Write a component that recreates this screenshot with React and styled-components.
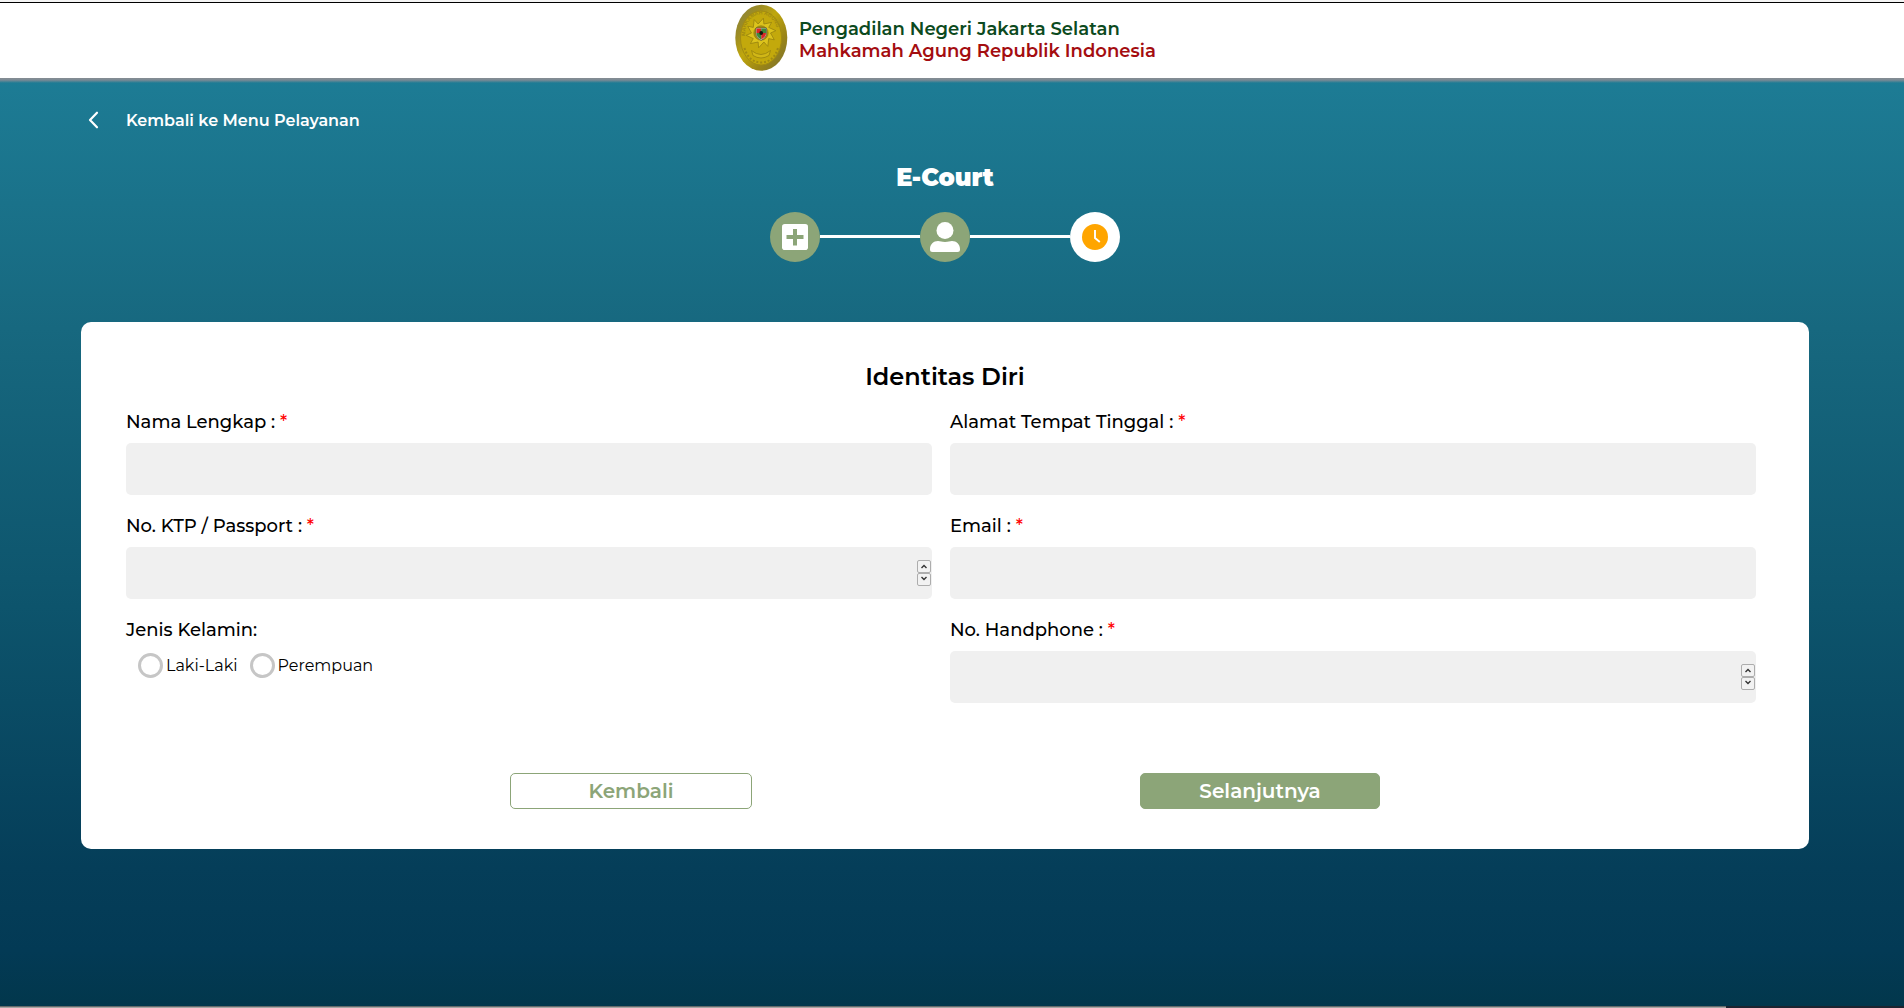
import React from "react";
import styled, { createGlobalStyle } from "styled-components";

const GlobalStyle = createGlobalStyle`
  * { box-sizing: border-box; }
  html, body { margin: 0; height: 100%; overflow: hidden; }
  body { font-family: Montserrat, Inter, "Liberation Sans", sans-serif; color: #000; }
  button, input { font-family: inherit; }
`;

const Page = styled.div`
  height: 1008px;
  display: flex;
  flex-direction: column;
`;

const Header = styled.header`
  flex: none;
  height: 78px;
  padding: 2px 14px 0 0;
  background: linear-gradient(#f4f4f4 2px, #000 2px, #000 3px, #fff 3px);
  display: flex;
  justify-content: center;
`;

const Brand = styled.div`
  display: flex;
  gap: 11px;
  width: 420px;
  padding-top: 2px;
`;

const EmblemDrawing = styled.svg`
  flex: none;
`;

const BrandText = styled.div`
  display: flex;
  flex-direction: column;
  padding-top: 14px;
`;

const BrandLine = styled.span`
  font-size: 18px;
  font-weight: 600;
  line-height: 22px;
  white-space: nowrap;
  color: ${(p) => p.$color};
`;

const Main = styled.main`
  flex: 1;
  padding: 0 95px 0 81px;
  background:
    linear-gradient(#858c92, #7b8a95 2px, rgba(29, 123, 148, 0) 5px),
    linear-gradient(#1d7c95 0%, #17687f 27%, #0d546c 57%, #053e59 85%, #033a55 94%, #02374c 100%);
`;

const BackLink = styled.a`
  display: flex;
  align-items: center;
  gap: 27px;
  height: 24px;
  margin-top: 30px;
  padding-left: 7px;
  color: #fff;
  font-size: 16px;
  font-weight: 600;
  white-space: nowrap;
`;

const ServiceTitle = styled.h1`
  margin: 31px 0 0;
  height: 30px;
  line-height: 30px;
  font-size: 24px;
  font-weight: 900;
  text-align: center;
  color: #fff;
`;

const Steps = styled.div`
  display: flex;
  justify-content: center;
  align-items: center;
  margin-top: 19px;
`;

const Step = styled.div`
  width: 50px;
  height: 50px;
  border-radius: 50%;
  background: ${(p) => (p.$current ? "#fff" : "#8ca578")};
  display: flex;
  align-items: center;
  justify-content: center;
`;

const StepLine = styled.div`
  width: 100px;
  height: 3px;
  margin-bottom: 1px;
  background: #fff;
`;

const Card = styled.form`
  height: 527px;
  margin-top: 60px;
  padding: 40px 53px 0 45px;
  background: #fff;
  border-radius: 10px;
`;

const CardTitle = styled.h2`
  margin: 0 -8px -1px 0;
  height: 30px;
  line-height: 30px;
  font-size: 24px;
  font-weight: 600;
  text-align: center;
`;

const Fields = styled.div`
  display: grid;
  grid-template-columns: 806px 806px;
  grid-auto-rows: 104px;
  column-gap: 18px;
`;

const Field = styled.div`
  display: flex;
  flex-direction: column;
`;

const Label = styled.label`
  height: 52px;
  padding-top: 19px;
  line-height: 24px;
  font-size: 18px;
  font-weight: 500;
  white-space: nowrap;
`;

const Required = styled.span`
  color: #f00;
`;

const InputBox = styled.div`
  display: flex;
  align-items: center;
  height: 52px;
  padding-right: 1px;
  border-radius: 5px;
  background: #f0f0f0;
`;

const Input = styled.input`
  flex: 1;
  min-width: 0;
  height: 100%;
  padding: 0 12px;
  border: 0;
  outline: 0;
  background: transparent;
  font-size: 18px;
`;

const Spinner = styled.div`
  display: flex;
  flex-direction: column;
`;

const SpinButton = styled.span`
  width: 14px;
  height: 13px;
  display: flex;
  align-items: center;
  justify-content: center;
  padding-bottom: ${(p) => (p.$down ? 2 : 0)}px;
  border: 1px solid #adadad;
  border-radius: 2px;
  background: #f2f2f2;
`;

const Radios = styled.div`
  display: flex;
  align-items: center;
  height: 25px;
  margin-top: 2px;
  padding-left: 12px;
`;

const RadioLabel = styled.label`
  display: flex;
  align-items: center;
  gap: 3px;
  width: ${(p) => p.$width}px;
  font-size: 16px;
  line-height: 20px;
  white-space: nowrap;
`;

const Radio = styled.span`
  flex: none;
  width: 25px;
  height: 25px;
  border: 3px solid #c6c6c6;
  border-radius: 50%;
  background: #fff;
`;

const Actions = styled.div`
  display: flex;
  gap: 388px;
  padding: 70px 0 0 384px;
`;

const Button = styled.button`
  width: ${(p) => (p.$primary ? 240 : 242)}px;
  height: 36px;
  padding: 0;
  border: 1px solid #8ca578;
  border-radius: 5px;
  background: ${(p) => (p.$primary ? "#8ca578" : "#fff")};
  color: ${(p) => (p.$primary ? "#fff" : "#8ca578")};
  font-size: 20px;
  font-weight: 600;
`;

const Footer = styled.div`
  flex: none;
  height: 2px;
  display: flex;
  justify-content: flex-end;
  background: linear-gradient(#666b6c 1px, #a5a5a3 1px);
`;

const FooterEdge = styled.div`
  width: 178px;
  background: #1d2430;
`;

function Emblem() {
  const sun = Array.from({ length: 20 }, (_, i) => {
    const r = i % 2 ? 9.5 : 15;
    const a = (i * Math.PI) / 10 + (i % 2 ? 0 : 0.16);
    return `${(26 + r * Math.sin(a)).toFixed(1)},${(29 - r * Math.cos(a)).toFixed(1)}`;
  }).join(" ");
  return (
    <EmblemDrawing width="53" height="67" viewBox="0 0 53 67">
      <defs>
        <linearGradient id="rim" x1="0" y1="0" x2="1" y2="1">
          <stop offset="0" stopColor="#858040" />
          <stop offset="0.25" stopColor="#9c8c25" />
          <stop offset="0.45" stopColor="#c0a70d" />
          <stop offset="0.7" stopColor="#9b8516" />
          <stop offset="1" stopColor="#777034" />
        </linearGradient>
        <path id="arc" d="M10 33 C9 3 43 3 42.500 33" />
      </defs>
      <ellipse cx="26.3" cy="33.8" rx="26" ry="33" fill="url(#rim)" />
      <ellipse cx="26" cy="34" rx="20.5" ry="27" fill="#c3a90c" stroke="#a28c12" strokeWidth="1" />
      <text fontSize="5.2" fontWeight="700" fill="#a18b12" fontFamily="Liberation Sans, sans-serif">
        <textPath href="#arc" startOffset="1">MAHKAMAH AGUNG</textPath>
      </text>
      <polygon points={sun} fill="#dcc31c" stroke="#96810f" strokeWidth="0.8" strokeLinejoin="round" />
      <circle cx="26" cy="29" r="7.2" fill="#a9920f" stroke="#867410" strokeWidth="0.6" />
      <path d="M21 24h10.500v5c0 4-3 6-5.300 7.300-2.300-1.300-5.200-3.300-5.200-7.300z" fill="#e8e8e0" stroke="#444" strokeWidth="0.6" />
      <path d="M21.500 24.500h4.700v4.500h-4.700z M26.200 29h4.800c0 3-2 5-4.800 6.500z" fill="#dc2626" />
      <path d="M26.200 24.500h4.800v4.500h-4.800z M21.500 29h4.700v6.500c-3-1.500-4.700-3.500-4.700-6.500z" fill="#3f8a39" />
      <circle cx="26.200" cy="29" r="1.900" fill="#15150d" />
      <path d="M16.500 46.500q9.500 8 19 0l-1.500 5q-8 5-16 0z" fill="#d1b717" stroke="#98830f" strokeWidth="0.8" />
      <path d="M9.500 44q4 14 16.500 14.500Q39 58 43 44" fill="none" stroke="#a08a13" strokeWidth="2" strokeDasharray="2 1.800" />
    </EmblemDrawing>
  );
}

function NumberSpinner() {
  return (
    <Spinner>
      <SpinButton>
        <svg width="8" height="5" viewBox="0 0 8 5"><path d="M1.500 4L4 1.500L6.500 4" fill="none" stroke="#333" strokeWidth="1.400" /></svg>
      </SpinButton>
      <SpinButton $down>
        <svg width="8" height="5" viewBox="0 0 8 5"><path d="M1.500 1L4 3.500L6.500 1" fill="none" stroke="#333" strokeWidth="1.400" /></svg>
      </SpinButton>
    </Spinner>
  );
}

function TextField({ label, number }) {
  return (
    <Field>
      <Label>{label} : <Required>*</Required></Label>
      <InputBox>
        <Input aria-label={label} />
        {number && <NumberSpinner />}
      </InputBox>
    </Field>
  );
}

export default function App() {
  return (
    <Page>
      <GlobalStyle />
      <Header>
        <Brand>
          <Emblem />
          <BrandText>
            <BrandLine $color="#0c4a20">Pengadilan Negeri Jakarta Selatan</BrandLine>
            <BrandLine $color="#a40d10">Mahkamah Agung Republik Indonesia</BrandLine>
          </BrandText>
        </Brand>
      </Header>
      <Main>
        <BackLink>
          <svg width="11" height="18" viewBox="0 0 11 18">
            <path d="M9 1.700L2 9l7 7.300" fill="none" stroke="#fff" strokeWidth="2.200" strokeLinecap="round" strokeLinejoin="round" />
          </svg>
          Kembali ke Menu Pelayanan
        </BackLink>
        <ServiceTitle>E-Court</ServiceTitle>
        <Steps>
          <Step>
            <svg width="26" height="26" viewBox="0 0 26 26">
              <rect width="26" height="26" rx="2.800" fill="#fff" />
              <path d="M11 5h4v6h6.500v4H15v6.500h-4V15H4.500v-4H11z" fill="#8ca578" />
            </svg>
          </Step>
          <StepLine />
          <Step>
            <svg width="30" height="30" viewBox="0 0 30 30">
              <circle cx="15" cy="8.500" r="8.500" fill="#fff" />
              <path d="M8 19c2.500 0 3.500 1 7 1s4.500-1 7-1c4.500 0 8 3.500 8 8v.5a2.500 2.500 0 0 1-2.500 2.500h-25A2.500 2.500 0 0 1 0 27.500V27c0-4.500 3.500-8 8-8z" fill="#fff" />
            </svg>
          </Step>
          <StepLine />
          <Step $current>
            <svg width="26" height="26" viewBox="0 0 26 26">
              <circle cx="13" cy="13" r="13" fill="#ffa500" />
              <path d="M13 6v8l4.800 4" fill="none" stroke="#fff" strokeWidth="1.900" />
            </svg>
          </Step>
        </Steps>
        <Card>
          <CardTitle>Identitas Diri</CardTitle>
          <Fields>
            <TextField label="Nama Lengkap" />
            <TextField label="Alamat Tempat Tinggal" />
            <TextField label="No. KTP / Passport" number />
            <TextField label="Email" />
            <Field>
              <Label as="div">Jenis Kelamin:</Label>
              <Radios>
                <RadioLabel $width={111.5}><Radio />Laki-Laki</RadioLabel>
                <RadioLabel $width={130}><Radio />Perempuan</RadioLabel>
              </Radios>
            </Field>
            <TextField label="No. Handphone" number />
          </Fields>
          <Actions>
            <Button type="button">Kembali</Button>
            <Button type="button" $primary>Selanjutnya</Button>
          </Actions>
        </Card>
      </Main>
      <Footer><FooterEdge /></Footer>
    </Page>
  );
}
